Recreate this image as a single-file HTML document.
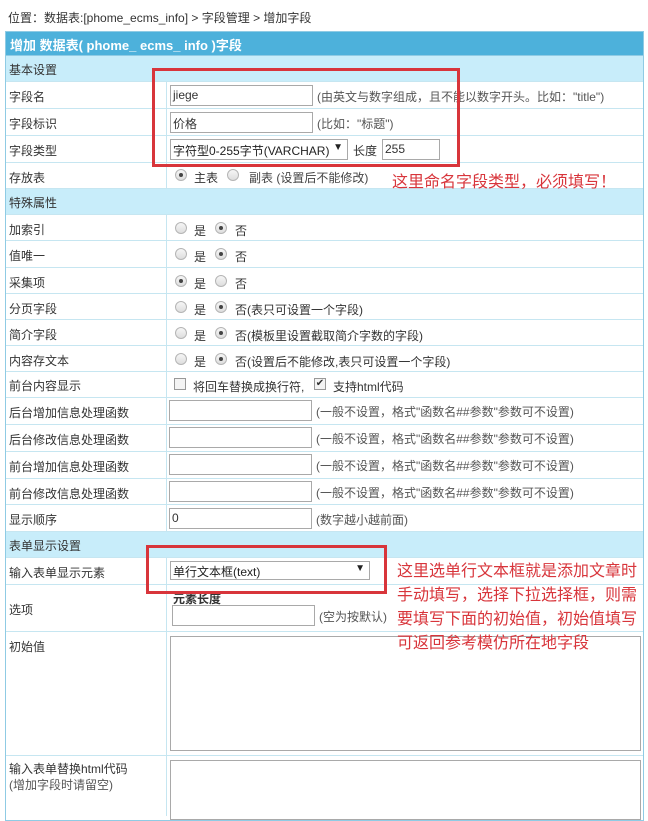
<!DOCTYPE html>
<html><head><meta charset="utf-8"><style>
*{margin:0;padding:0;box-sizing:border-box}
body{width:648px;height:810px;overflow:hidden;background:#fff;font-family:"Liberation Sans","Noto Sans CJK SC",sans-serif;font-size:12px;color:#333;position:relative}
.a{position:absolute}
.loc{left:8px;top:9px}
.tbl{left:5px;top:31px;width:639px;height:790px;border:1px solid #8fcbe4;border-top:none}
.hd{left:5px;top:31px;width:639px;height:25px;background:#4db1db;color:#fff;font-weight:bold;font-size:13px;padding:3px 0 0 4px;border:1px solid #8fcbe4}
.r{position:absolute;left:6px;width:637px;border-bottom:1px solid #c6e6f1}
.sec{background:#c8edfa}
.l{position:absolute;left:3px}
.v{position:absolute;left:160px;top:0;bottom:0;border-left:1px solid #c6e6f1}
.sec .v{display:none}
.inp{position:absolute;border:1px solid #a9a9a9;height:21px;background:#fff;padding:2px 2px;font-size:12px}
.h{color:#555;position:absolute}
.rad{position:absolute;width:12px;height:12px;border-radius:50%;border:1px solid #b5b5b5;background:linear-gradient(#f6f6f6,#ddd)}
.rad.on::after{content:"";position:absolute;left:3px;top:3px;width:4px;height:4px;border-radius:50%;background:#444}
.chk{position:absolute;width:12px;height:12px;border:1px solid #999;background:#f4f4f4}
.red{position:absolute;border:3px solid #d8353b}
.rt{position:absolute;color:#d8353b;font-size:16px;line-height:24px}
</style></head><body>
<div class="a loc">位置：数据表:[phome_ecms_info] &gt; 字段管理 &gt; 增加字段</div>
<div class="a tbl"></div>
<div class="a hd">增加 数据表( phome_ ecms_ info )字段</div>

<div class="r sec" style="top:56px;height:26px"><span class="l" style="top:5px">基本设置</span></div>
<div class="r" style="top:82px;height:27px"><span class="l" style="top:6px">字段名</span><div class="v"></div>
 <div class="inp" style="left:164px;top:3px;width:143px">jiege</div><span class="h" style="left:311px;top:6px">(由英文与数字组成，且不能以数字开头。比如："title")</span></div>
<div class="r" style="top:109px;height:27px"><span class="l" style="top:6px">字段标识</span><div class="v"></div>
 <div class="inp" style="left:164px;top:3px;width:143px">价格</div><span class="h" style="left:311px;top:6px">(比如："标题")</span></div>
<div class="r" style="top:136px;height:27px"><span class="l" style="top:6px">字段类型</span><div class="v"></div>
 <div class="inp" style="left:164px;top:3px;width:178px;color:#222">字符型0-255字节(VARCHAR)<span style="position:absolute;right:4px;top:2px;font-size:10px">▼</span></div>
 <span style="position:absolute;left:347px;top:6px">长度</span><div class="inp" style="left:376px;top:3px;width:58px">255</div></div>
<div class="r" style="top:163px;height:26px"><span class="l" style="top:6px">存放表</span><div class="v"></div>
 <span class="rad on" style="left:169px;top:6px"></span><span class="a" style="left:188px;top:6px">主表</span><span class="rad" style="left:221px;top:6px"></span><span class="h" style="left:243px;top:6px;color:#444">副表 (设置后不能修改)</span></div>
<div class="r sec" style="top:189px;height:26px"><span class="l" style="top:5px">特殊属性</span></div>
<div class="r" style="top:215px;height:26px"><span class="l" style="top:6px">加索引</span><div class="v"></div><span class="rad" style="left:169px;top:7px"></span><span class="a" style="left:188px;top:7px">是</span><span class="rad on" style="left:209px;top:7px"></span><span class="a" style="left:229px;top:7px">否</span></div>
<div class="r" style="top:241px;height:27px"><span class="l" style="top:6px">值唯一</span><div class="v"></div><span class="rad" style="left:169px;top:7px"></span><span class="a" style="left:188px;top:7px">是</span><span class="rad on" style="left:209px;top:7px"></span><span class="a" style="left:229px;top:7px">否</span></div>
<div class="r" style="top:268px;height:26px"><span class="l" style="top:6px">采集项</span><div class="v"></div><span class="rad on" style="left:169px;top:7px"></span><span class="a" style="left:188px;top:7px">是</span><span class="rad" style="left:209px;top:7px"></span><span class="a" style="left:229px;top:7px">否</span></div>
<div class="r" style="top:294px;height:26px"><span class="l" style="top:6px">分页字段</span><div class="v"></div><span class="rad" style="left:169px;top:7px"></span><span class="a" style="left:188px;top:7px">是</span><span class="rad on" style="left:209px;top:7px"></span><span class="a" style="left:229px;top:7px">否(表只可设置一个字段)</span></div>
<div class="r" style="top:320px;height:26px"><span class="l" style="top:6px">简介字段</span><div class="v"></div><span class="rad" style="left:169px;top:7px"></span><span class="a" style="left:188px;top:7px">是</span><span class="rad on" style="left:209px;top:7px"></span><span class="a" style="left:229px;top:7px">否(模板里设置截取简介字数的字段)</span></div>
<div class="r" style="top:346px;height:26px"><span class="l" style="top:6px">内容存文本</span><div class="v"></div><span class="rad" style="left:169px;top:7px"></span><span class="a" style="left:188px;top:7px">是</span><span class="rad on" style="left:209px;top:7px"></span><span class="a" style="left:229px;top:7px">否(设置后不能修改,表只可设置一个字段)</span></div>
<div class="r" style="top:372px;height:26px"><span class="l" style="top:5px">前台内容显示</span><div class="v"></div><span class="chk" style="left:168px;top:6px"></span><span class="a" style="left:187px;top:6px">将回车替换成换行符,</span><span class="chk" style="left:308px;top:6px;font-size:10px;line-height:10px;text-align:center">✔</span><span class="a" style="left:327px;top:6px">支持html代码</span></div>
<div class="r" style="top:398px;height:27px"><span class="l" style="top:6px">后台增加信息处理函数</span><div class="v"></div><div class="inp" style="left:163px;top:2px;width:143px"></div><span class="h" style="left:310px;top:5px">(一般不设置，格式"函数名##参数"参数可不设置)</span></div>
<div class="r" style="top:425px;height:27px"><span class="l" style="top:6px">后台修改信息处理函数</span><div class="v"></div><div class="inp" style="left:163px;top:2px;width:143px"></div><span class="h" style="left:310px;top:5px">(一般不设置，格式"函数名##参数"参数可不设置)</span></div>
<div class="r" style="top:452px;height:27px"><span class="l" style="top:6px">前台增加信息处理函数</span><div class="v"></div><div class="inp" style="left:163px;top:2px;width:143px"></div><span class="h" style="left:310px;top:5px">(一般不设置，格式"函数名##参数"参数可不设置)</span></div>
<div class="r" style="top:479px;height:26px"><span class="l" style="top:6px">前台修改信息处理函数</span><div class="v"></div><div class="inp" style="left:163px;top:2px;width:143px"></div><span class="h" style="left:310px;top:5px">(一般不设置，格式"函数名##参数"参数可不设置)</span></div>
<div class="r" style="top:505px;height:27px"><span class="l" style="top:6px">显示顺序</span><div class="v"></div><div class="inp" style="left:163px;top:3px;width:143px">0</div><span class="h" style="left:310px;top:6px">(数字越小越前面)</span></div>
<div class="r sec" style="top:532px;height:26px"><span class="l" style="top:5px">表单显示设置</span></div>
<div class="r" style="top:558px;height:27px"><span class="l" style="top:6px">输入表单显示元素</span><div class="v"></div><div class="inp" style="left:164px;top:3px;width:200px;height:19px;padding-top:1px;color:#222">单行文本框(text)<span style="position:absolute;right:4px;top:1px;font-size:10px">▼</span></div></div>
<div class="r" style="top:585px;height:47px"><span class="l" style="top:16px">选项</span><div class="v"></div><span class="a" style="left:167px;top:5px;font-weight:bold">元素长度</span><div class="inp" style="left:166px;top:20px;width:143px"></div><span class="h" style="left:313px;top:23px">(空为按默认)</span></div>
<div class="r" style="top:632px;height:124px"><span class="l" style="top:6px">初始值</span><div class="v"></div><div class="inp" style="left:164px;top:4px;width:471px;height:115px"></div></div>
<div class="r" style="top:756px;height:60px;border-bottom:none"><span class="l" style="top:5px;line-height:16px">输入表单替换html代码<br><span style="color:#555">(增加字段时请留空)</span></span><div class="v"></div><div class="inp" style="left:164px;top:4px;width:471px;height:60px"></div></div>

<div class="red" style="left:152px;top:68px;width:308px;height:99px"></div>
<div class="red" style="left:146px;top:545px;width:241px;height:49px"></div>
<div class="rt" style="left:392px;top:171px">这里命名字段类型，必须填写！</div>
<div class="rt" style="left:397px;top:560px;width:245px">这里选单行文本框就是添加文章时手动填写，选择下拉选择框，则需要填写下面的初始值，初始值填写可返回参考模仿所在地字段</div>
</body></html>
